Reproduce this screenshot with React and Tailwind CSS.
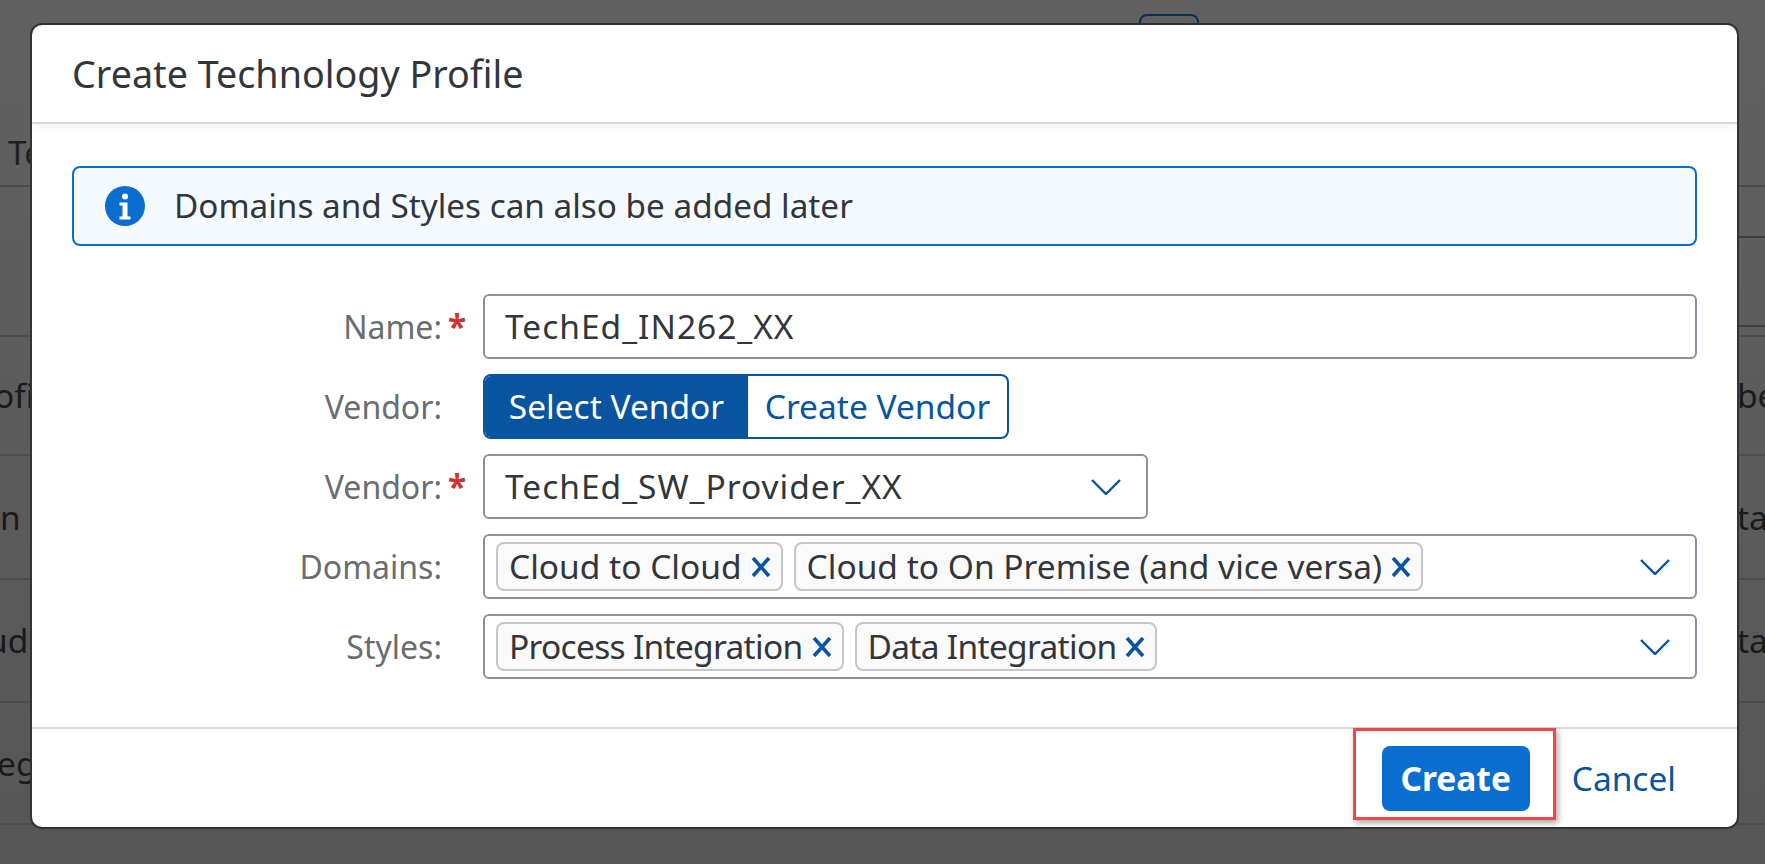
import React from 'react';

const inputBox = 'h-[65px] rounded-md border-2 border-[#89919a] bg-white';

function Chevron() {
  return (
    <svg viewBox="0 0 30 16" className="h-4 w-[30px] shrink-0" fill="none" stroke="#0854a0" strokeWidth="2.4">
      <path d="M1 1 15 15 29 1" />
    </svg>
  );
}

function Field({ label, required, children }) {
  return (
    <div className="flex h-[65px] items-center">
      <div className="flex w-[410px] shrink-0 items-center justify-end text-[32px] text-[#6a6d70]">
        <span className="relative">
          {label}
          {required && <span className="absolute left-full top-[-2px] ml-[6px] text-[33.5px] font-bold text-[#cc3333]">*</span>}
        </span>
      </div>
      <div className="min-w-0 flex-1 pl-[41px]">{children}</div>
    </div>
  );
}

function Token({ label, tight }) {
  return (
    <span className="flex h-[49px] items-center gap-[9px] rounded-lg border-2 border-[#c4c6c8] bg-[#fafafa] pl-[11px] pr-[10px] text-[33.5px] text-[#32363a]">
      <span className={tight ? 'tracking-[-0.7px]' : ''}>{label}</span>
      <svg viewBox="0 0 20 20" className="h-5 w-5" fill="none" stroke="#0854a0" strokeWidth="3.6">
        <path d="M2 1 18 19M18 1 2 19" />
      </svg>
    </span>
  );
}

function TokenInput({ tokens, tight }) {
  return (
    <div className={`${inputBox} flex items-center gap-[11px] pl-[11px] pr-[25px]`}>
      {tokens.map((t) => (
        <Token key={t} label={t} tight={tight} />
      ))}
      <span className="ml-auto">
        <Chevron />
      </span>
    </div>
  );
}

function BackdropRow({ height, left, right, shift = '' }) {
  return (
    <div className={`flex items-center justify-between border-b-2 border-[#4c4c4c] text-[33.5px] text-[#1a1a1a] ${height}`}>
      <div className={`whitespace-nowrap ${shift}`}>{left}</div>
      <div className="w-[28px] whitespace-nowrap">{right}</div>
    </div>
  );
}

export default function App() {
  return (
    <div className="relative h-[864px] w-[1765px] overflow-hidden bg-gradient-to-b from-[#616161] to-[#565656] font-['Noto_Sans',sans-serif]">
      {/* page behind the dialog */}
      <div className="h-[119px] pl-[1139px] pt-[14px]">
        <div className="h-[40px] w-[60px] rounded-lg border-2 border-[#0a2d55]" />
      </div>
      <div className="flex h-[68px] items-center border-b-2 border-[#4c4c4c] pl-[8px] text-[33.5px] text-[#1f1f1f]">Te</div>
      <div className="flex h-[150px] justify-end border-b-2 border-[#4c4c4c]">
        <div className="w-[28px]">
          <div className="h-[51px] border-b-2 border-[#3c3f42]" />
          <div className="h-[89px] border-b-2 border-[#3c3f42]" />
        </div>
      </div>
      <BackdropRow height="h-[119px]" left="ofile" right="be" shift="-ml-[6px]" />
      <BackdropRow height="h-[124px]" left="n" right="ta" />
      <BackdropRow height="h-[123px]" left="ud" right="ta" shift="-ml-[13px]" />
      <BackdropRow height="h-[122px]" left="egr" shift="-ml-[3px]" />

      {/* dialog */}
      <div className="absolute left-[32px] top-[25px] flex h-[802px] w-[1705px] flex-col rounded-[10px] bg-white shadow-[0_0_0_2px_#333333]">
        <div className="flex h-[99px] shrink-0 items-center border-b-2 border-[#d9d9d9] px-[40px] pt-[2px] text-[37.7px] text-[#32363a] shadow-[0_4px_8px_rgba(0,0,0,0.05)]">
          Create Technology Profile
        </div>

        <div className="flex-1 px-[40px] pt-[42px]">
          <div className="flex h-[80px] items-center gap-[29px] rounded-lg border-2 border-[#0a6ed1] bg-[#f5faff] pl-[31px] text-[33.3px] text-[#32363a]">
            <svg viewBox="0 0 40 40" className="h-10 w-10 shrink-0">
              <circle cx="20" cy="20" r="20" fill="#0a6ed1" />
              <circle cx="20" cy="10.5" r="3" fill="#fff" />
              <path d="M14.5 16.5h8v14h3v3h-11v-3h3v-11h-3z" fill="#fff" />
            </svg>
            Domains and Styles can also be added later
          </div>

          <div className="mt-[48px] -ml-[40px] flex flex-col gap-[15px]">
            <Field label="Name:" required>
              <div className={`${inputBox} flex items-center pl-[20px] text-[33.5px] tracking-[1px] text-[#32363a]`}>TechEd_IN262_XX</div>
            </Field>
            <Field label="Vendor:">
              <div className="flex h-[65px] w-[526px] rounded-lg border-2 border-[#0854a0] text-[33.5px]">
                <div className="flex w-[263px] items-center justify-center rounded-l-md bg-[#0854a0] text-white">Select Vendor</div>
                <div className="flex flex-1 items-center justify-center text-[#0854a0]">Create Vendor</div>
              </div>
            </Field>
            <Field label="Vendor:" required>
              <div className={`${inputBox} flex w-[665px] items-center justify-between pl-[20px] pr-[25px] text-[33.5px] text-[#32363a]`}>
                <span className="tracking-[1px]">TechEd_SW_Provider_XX</span>
                <Chevron />
              </div>
            </Field>
            <Field label="Domains:">
              <TokenInput tokens={['Cloud to Cloud', 'Cloud to On Premise (and vice versa)']} />
            </Field>
            <Field label="Styles:">
              <TokenInput tokens={['Process Integration', 'Data Integration']} tight />
            </Field>
          </div>
        </div>

        <div className="flex h-[100px] shrink-0 items-center justify-end gap-[42px] border-t-2 border-[#d9d9d9] pr-[61px]">
          <div className="relative">
            <button type="button" className="h-[65px] w-[148px] rounded-lg bg-[#0a6ed1] text-[33.5px] font-bold text-white">
              Create
            </button>
            <div className="absolute -bottom-[9px] -left-[29px] -right-[26px] -top-[18px] border-[3px] border-[#f04848] shadow-[2px_3px_6px_rgba(0,0,0,0.35)]" />
          </div>
          <span className="text-[33.5px] text-[#0854a0]">Cancel</span>
        </div>
      </div>
    </div>
  );
}
